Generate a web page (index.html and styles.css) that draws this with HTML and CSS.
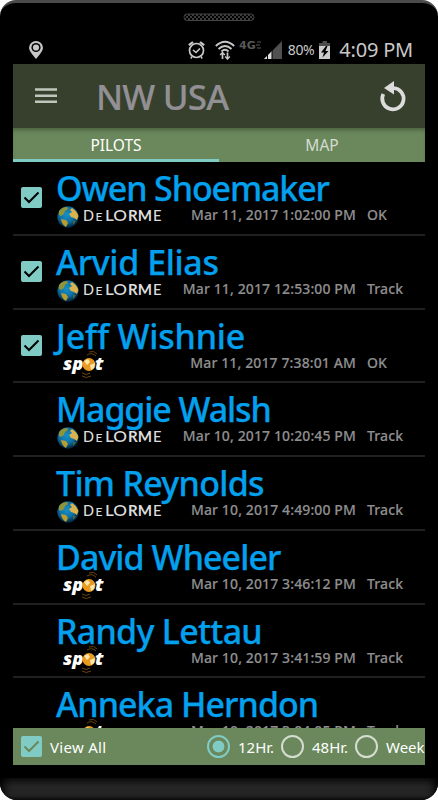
FILE: index.html
```html
<!DOCTYPE html>
<html lang="en">
<head>
  <meta charset="UTF-8">
  <meta name="viewport" content="width=device-width, initial-scale=1.0">
  <title>NW USA - Pilots</title>
  <link rel="stylesheet" href="styles.css">
</head>
<body>
  <!-- Shared logos and icons -->
  <svg class="defs" width="0" height="0">
    <defs>
      <radialGradient id="sea" cx="45%" cy="40%" r="58%">
        <stop offset="0" stop-color="#1791c9"/>
        <stop offset="0.6" stop-color="#0d70a6"/>
        <stop offset="1" stop-color="#03283f"/>
      </radialGradient>
      <pattern id="mesh" width="4" height="4" patternUnits="userSpaceOnUse">
        <path d="M0 0l2 2 2-2M0 4l2-2 2 2" stroke="#4a4a4a" stroke-width="0.8" fill="none"/>
      </pattern>
      <symbol id="delorme" viewBox="0 0 106 24">
        <circle cx="11" cy="11" r="10.7" fill="url(#sea)"/>
        <path d="M2 5Q5 1 10 1L11 3 8 5 7 8 4 10 2 9Z" fill="#8f9438"/>
        <path d="M15 2Q20 5 21.400 10L20 14 17 12 14 11 12 8 15 6 13 4Z" fill="#d9b34e"/>
        <path d="M4 13L9 14 11 17 9 21Q5 19 4 13Z" fill="#b99d31"/>
        <path d="M16 15L19 15 16 19Z" fill="#476c4a"/>
        <g class="delorme-text">
          <text x="26" y="15" font-size="15" textLength="11" lengthAdjust="spacingAndGlyphs">D</text>
          <text x="38.500" y="15" font-size="12" textLength="7" lengthAdjust="spacingAndGlyphs">E</text>
          <text x="48" y="15" font-size="15" textLength="22" lengthAdjust="spacingAndGlyphs">LO</text>
          <text x="71" y="15" font-size="15" font-weight="bold" textLength="24" lengthAdjust="spacingAndGlyphs">RM</text>
          <text x="96" y="15" font-size="15" textLength="8.500" lengthAdjust="spacingAndGlyphs">E</text>
        </g>
      </symbol>
      <symbol id="spot" viewBox="0 0 50 28">
        <g fill="none" stroke="#6b4510" stroke-width="1">
          <path d="M30 4Q35 1 39 5M32 1Q37-1 40 3M25 22Q29 25 33 22M25 25Q29 28 34 25"/>
        </g>
        <text class="spot-text" x="6" y="18.500" textLength="20.500" lengthAdjust="spacingAndGlyphs">sp</text>
        <circle cx="32" cy="13.500" r="6.500" fill="#e99a20"/>
        <path d="M27 10L31 8 33 11 30 14ZM33 14L38 12 37 17 34 19Z" fill="#ffe6a8"/>
        <text class="spot-text" x="38" y="18.500" textLength="8.500" lengthAdjust="spacingAndGlyphs">t</text>
      </symbol>
      <symbol id="check" viewBox="0 0 21 21">
        <path d="M3.500 10.500L8 15 17.500 5.500" fill="none" stroke="currentColor" stroke-width="2"/>
      </symbol>
    </defs>
  </svg>

  <div class="phone">
    <svg class="speaker" width="72" height="9">
      <rect x="1" y="1" width="70" height="6.500" rx="3.200" fill="url(#mesh)" stroke="#444"/>
    </svg>

    <div class="status-bar">
      <svg class="pin" width="14" height="18" viewBox="0 0 14 18">
        <path d="M7 0A7 7 0 0 0 0 7Q0 10 7 18 14 10 14 7A7 7 0 0 0 7 0Z" fill="#c8c8c8"/>
        <circle cx="7" cy="6.500" r="4.600" fill="#000"/>
        <circle cx="7" cy="6.500" r="3.100" fill="#c8c8c8"/>
      </svg>
      <svg class="alarm" width="17" height="18" viewBox="0 0 17 18" fill="none" stroke="#c8c8c8">
        <circle cx="8.500" cy="9.500" r="7" stroke-width="1.700"/>
        <path d="M5 9L8 11.500 12 7.500" stroke-width="1.600"/>
        <path d="M0.800 4.200L5 1M12 1L16.200 4.200" stroke-width="2.200"/>
        <path d="M4 15.500L2.800 17.500M13 15.500L14.200 17.500" stroke-width="1.500"/>
      </svg>
      <svg class="wifi" width="20" height="20" viewBox="0 0 20 20" fill="none" stroke="#c8c8c8">
        <path d="M0.800 6Q10-2.500 19.200 6M3.500 9Q10 3 16.500 9M6.500 11.500Q10 8 13.500 11.500" stroke-width="1.900"/>
        <path d="M7.500 19V13M12.500 12.500V18" stroke-width="1.700"/>
        <path d="M5.200 15L7.500 12.500 9.800 15M10.200 16.500L12.500 19 14.800 16.500" stroke-width="1.500"/>
      </svg>
      <span class="lte">4G<svg width="5" height="8"><path d="M1 1H5M0 4H4M1 7H5" stroke="#585858"/></svg></span>
      <svg class="signal" width="18" height="18">
        <path d="M0 18L18 0V18Z" fill="#505050"/>
        <path d="M0 18L8 10V18Z" fill="#ddd"/>
        <path d="M3.500 13V18M8 9V18" stroke="#000"/>
      </svg>
      <span class="percent">80%</span>
      <svg class="battery" width="11" height="18">
        <path d="M3.500 0H8V2H11V6H0V2H3.500Z" fill="#4c4c4c"/>
        <path d="M0 5H11V18H0Z" fill="#ccc"/>
        <path d="M7 5L2 11.500H5L3.500 16.500 9.500 10H6.500L8.500 5Z" fill="#000"/>
      </svg>
      <span class="clock">4:09 PM</span>
    </div>

    <div class="screen">
      <div class="app-bar">
        <svg class="menu" width="22" height="16">
          <path d="M0 1.500H22M0 7.700H22M0 13.800H22" stroke="#bfc6bb" stroke-width="2.500"/>
        </svg>
        <h1>NW USA</h1>
        <svg class="refresh" width="27" height="31" viewBox="0 0 27 31">
          <path d="M3.300 13A10.700 10.700 0 1 0 13.500 7" fill="none" stroke="#dcdcdc" stroke-width="3.700"/>
          <path d="M4 7L14 0V13.500Z" fill="#dcdcdc"/>
        </svg>
      </div>

      <div class="tabs">
        <div class="tab active">PILOTS</div>
        <div class="tab">MAP</div>
      </div>

      <div class="list">
        <div class="row">
          <span class="checkbox"><svg><use href="#check"/></svg></span>
          <div class="pilot">
            <div class="name tighter">Owen Shoemaker</div>
            <div class="meta"><svg class="delorme"><use href="#delorme"/></svg><span class="date">Mar 11, 2017 1:02:00 PM</span><span class="type">OK</span></div>
          </div>
        </div>
        <div class="row">
          <span class="checkbox"><svg><use href="#check"/></svg></span>
          <div class="pilot">
            <div class="name loose">Arvid Elias</div>
            <div class="meta"><svg class="delorme"><use href="#delorme"/></svg><span class="date">Mar 11, 2017 12:53:00 PM</span><span class="type">Track</span></div>
          </div>
        </div>
        <div class="row">
          <span class="checkbox"><svg><use href="#check"/></svg></span>
          <div class="pilot">
            <div class="name looser">Jeff Wishnie</div>
            <div class="meta"><svg class="spot"><use href="#spot"/></svg><span class="date">Mar 11, 2017 7:38:01 AM</span><span class="type">OK</span></div>
          </div>
        </div>
        <div class="row">
          <div class="pilot">
            <div class="name tighter">Maggie Walsh</div>
            <div class="meta"><svg class="delorme"><use href="#delorme"/></svg><span class="date">Mar 10, 2017 10:20:45 PM</span><span class="type">Track</span></div>
          </div>
        </div>
        <div class="row">
          <div class="pilot">
            <div class="name">Tim Reynolds</div>
            <div class="meta"><svg class="delorme"><use href="#delorme"/></svg><span class="date">Mar 10, 2017 4:49:00 PM</span><span class="type">Track</span></div>
          </div>
        </div>
        <div class="row">
          <div class="pilot">
            <div class="name tight">David Wheeler</div>
            <div class="meta"><svg class="spot"><use href="#spot"/></svg><span class="date">Mar 10, 2017 3:46:12 PM</span><span class="type">Track</span></div>
          </div>
        </div>
        <div class="row">
          <div class="pilot">
            <div class="name">Randy Lettau</div>
            <div class="meta"><svg class="spot"><use href="#spot"/></svg><span class="date">Mar 10, 2017 3:41:59 PM</span><span class="type">Track</span></div>
          </div>
        </div>
        <div class="row">
          <div class="pilot">
            <div class="name tight">Anneka Herndon</div>
            <div class="meta"><svg class="spot"><use href="#spot"/></svg><span class="date">Mar 10, 2017 3:04:05 PM</span><span class="type">Track</span></div>
          </div>
        </div>
      </div>

      <div class="filter-bar">
        <span class="checkbox"><svg><use href="#check"/></svg></span>
        <span class="view-all">View All</span>
        <span class="radio selected"></span><span class="range">12Hr.</span>
        <span class="radio"></span><span class="range">48Hr.</span>
        <span class="radio"></span><span class="range">Week</span>
      </div>
    </div>
    <div class="chin"></div>
  </div>
</body>
</html>
```
FILE: styles.css
```css
* {
  box-sizing: border-box;
}

body {
  margin: 0;
  background-color: #fff;
  font-family: "Noto Sans", "Open Sans", sans-serif;
  overflow: hidden;
}

svg {
  display: block;
  flex: none;
}

.defs {
  position: absolute;
}

.phone {
  display: flex;
  flex-direction: column;
  width: 438px;
  height: 800px;
  background-color: #000;
  border-top: 3px solid #4a4a4a;
  border-radius: 16px 16px 17px 17px;
  overflow: hidden;
}

.speaker {
  margin: 10px 0 0 183px;
}

/* Status bar */
.status-bar {
  display: flex;
  align-items: center;
  height: 42px;
  padding: 13px 25px 0 29px;
  color: #c8c8c8;
  white-space: nowrap;
}

.alarm {
  margin-left: 145px;
}

.wifi {
  margin-left: 10px;
}

.lte {
  display: flex;
  width: 22px;
  margin: -8px 0 0 4px;
  font-family: "DejaVu Sans", sans-serif;
  font-size: 11px;
  font-weight: bold;
  line-height: 9px;
  color: #585858;
}

.signal {
  margin-left: 3px;
}

.percent {
  width: 28px;
  margin-left: 6px;
  font-size: 14px;
  letter-spacing: -0.3px;
}

.battery {
  margin-left: 4px;
}

.clock {
  margin-left: 9px;
  font-size: 20px;
  letter-spacing: -0.2px;
}

/* App */
.screen {
  display: flex;
  flex-direction: column;
  height: 701px;
  margin: 0 13px;
  overflow: hidden;
}

.app-bar {
  display: flex;
  flex: none;
  align-items: center;
  height: 64px;
  padding: 0 18px 0 22px;
  background-color: #36402d;
}

.refresh {
  overflow: visible;
}

h1 {
  margin: 2px auto 0 39px;
  font-size: 35px;
  font-weight: 500;
  line-height: 64px;
  letter-spacing: -0.8px;
  color: #929094;
  -webkit-text-stroke: 0.2px #929094;
}

.tabs {
  display: flex;
  flex: none;
  height: 34px;
  background-color: #6a885b;
  box-shadow: inset 0 4px 4px -2px rgba(0, 0, 0, 0.3);
}

.tab {
  flex: 1;
  padding-top: 1px;
  border-bottom: 3px solid transparent;
  font-size: 15.5px;
  line-height: 32px;
  text-align: center;
  color: #d5ddd1;
}

.tab.active {
  color: #fff;
  border-bottom-color: #80cbc4;
}

.list {
  flex: 1;
  min-height: 0;
  overflow: hidden;
}

.row {
  display: flex;
  height: 73.75px;
  padding-left: 8px;
  border-bottom: 2.5px solid #202020;
}

.checkbox {
  flex: none;
  width: 21px;
  height: 21px;
  margin-top: 25px;
  border-radius: 2px;
  background-color: #80cbc4;
  color: #000;
}

.checkbox svg {
  width: 21px;
  height: 21px;
}

.pilot {
  width: 369px;
  margin-left: auto;
  padding-top: 7px;
}

.name {
  height: 37px;
  font-size: 34px;
  font-weight: 500;
  line-height: 38px;
  letter-spacing: -0.72px;
  white-space: nowrap;
  color: #03a0ee;
  -webkit-text-stroke: 0.25px #03a0ee;
}

.name.tight {
  letter-spacing: -0.95px;
}

.name.tighter {
  letter-spacing: -1.13px;
}

.name.loose {
  letter-spacing: -0.4px;
}

.name.looser {
  letter-spacing: -0.2px;
}

.meta {
  display: flex;
  height: 18px;
  font-size: 14px;
  font-weight: 500;
  line-height: 18px;
  letter-spacing: 0.12px;
  white-space: nowrap;
  color: #8f8f8f;
  -webkit-text-stroke: 0.15px #8f8f8f;
}

.delorme {
  width: 106px;
  height: 24px;
  margin-left: 1px;
}

.spot {
  width: 50px;
  height: 28px;
  margin: -3px 0 0 1px;
}

.delorme-text {
  font-family: "Lato", sans-serif;
  letter-spacing: 0;
  fill: #ddd;
  -webkit-text-stroke: 0;
}

.spot-text {
  font-family: "Open Sans", sans-serif;
  font-size: 17px;
  font-style: italic;
  font-weight: 800;
  letter-spacing: 0;
  fill: #fff;
  -webkit-text-stroke: 0.7px #fff;
}

.date {
  margin-left: auto;
}

.type {
  width: 58px;
  margin-left: 11px;
}

/* Bottom filters */
.filter-bar {
  display: flex;
  flex: none;
  align-items: center;
  height: 37px;
  padding-left: 8px;
  background-color: #6a885b;
  font-size: 15px;
  white-space: nowrap;
  color: #fff;
}

.filter-bar .checkbox {
  margin-top: 0;
  color: #6a885b;
}

.view-all {
  flex: none;
  width: 157px;
  margin-left: 8px;
  letter-spacing: 0.3px;
}

.radio {
  flex: none;
  width: 23px;
  height: 23px;
  border: 2.5px solid #d5ddd1;
  border-radius: 50%;
}

.radio.selected {
  border-color: #80cbc4;
  background: radial-gradient(circle, #80cbc4 5.5px, transparent 6.3px);
}

.range {
  flex: none;
  width: 43px;
  margin-left: 8px;
}

.chin {
  height: 22px;
  margin-top: 13px;
  background: linear-gradient(#111, #252525 40%, #252525 80%, #101010);
  box-shadow: inset 8px 0 8px -4px #000, inset -8px 0 8px -4px #000;
}
```
